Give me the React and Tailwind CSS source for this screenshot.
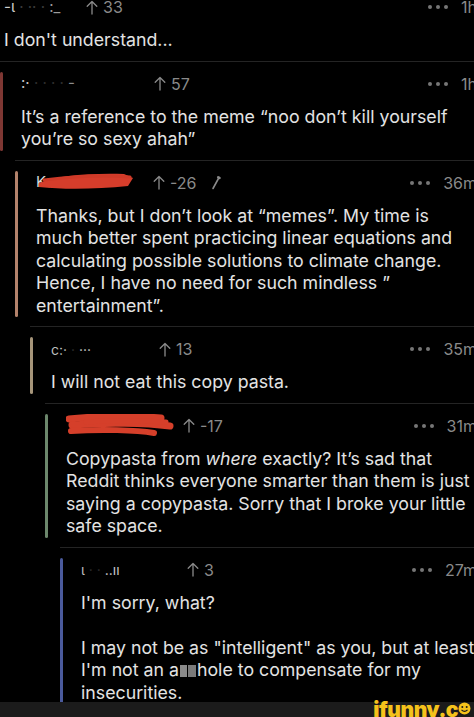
import React from 'react';

const FONT = { fontFamily: 'Inter, "Noto Sans", sans-serif' };

function UpArrow() {
  return (
    <svg width="12" height="15" viewBox="0 0 12 15" fill="none" stroke="#8a8a8a" strokeWidth="1.3" strokeLinecap="round" strokeLinejoin="round">
      <path d="M6 14V1.5M1.2 6.3L6 1.5l4.8 4.8" />
    </svg>
  );
}

function Dots() {
  return (
    <div className="flex items-center gap-[4px]">
      <span className="w-[4px] h-[4px] rounded-full bg-[#767676]" />
      <span className="w-[4px] h-[4px] rounded-full bg-[#767676]" />
      <span className="w-[4px] h-[4px] rounded-full bg-[#767676]" />
    </div>
  );
}

function Comment({ indent, bar, user, score, edited, time, children, first }) {
  return (
    <div className={`${indent} ${first ? '-mt-[15px]' : 'border-t border-[#242424]'}`}>
      <div className="flex pt-[10px] pb-[9px]">
        {bar && <div className={`w-[3px] shrink-0 rounded-full mr-[18px] ${bar}`} />}
        <div className="flex-1 min-w-0">
          <div className="flex items-center h-[24px] text-[16px] text-[#8a8a8a]">
            {user}
            <UpArrow />
            <span className="ml-[5px]">{score}</span>
            {edited && (
              <svg className="ml-[14px]" width="10" height="15" viewBox="0 0 10 15" fill="none" stroke="#8a8a8a" strokeLinecap="round">
                <path d="M2 13.5L8 2.5" strokeWidth="1.6" />
                <path d="M7.2 2.2l1.4 0.8" strokeWidth="2.4" />
              </svg>
            )}
            <div className="ml-auto flex items-center gap-[13px]">
              <Dots />
              <span>{time}</span>
            </div>
          </div>
          <div className="mt-[10px] text-[17.75px] leading-[22.5px] text-[#e3e3e3] whitespace-nowrap">
            {children}
          </div>
        </div>
      </div>
    </div>
  );
}

export default function App() {
  return (
    <div className="relative w-[474px] h-[717px] overflow-hidden bg-black" style={FONT}>
      <div className="w-[477px]">
        <Comment
          first
          indent="pl-[4px]"
          time="1h"
          score="33"
          user={
            <span className="w-[82px] shrink-0 text-[15px]">
              <span className="text-[#d0d0d0]">-ι</span>
              <span className="text-[#3c3c3c]"> · ·· ·  </span>
              <span className="text-[#9c9c9c]">:_</span>
            </span>
          }
        >
          I don't understand...
        </Comment>

        <Comment
          indent="ml-0"
          bar="bg-[#7e3733]"
          time="1h"
          score="57"
          user={
            <span className="w-[133px] shrink-0 text-[15px]">
              <span className="text-[#c8c8c8]">:·</span>
              <span className="text-[#2e2e2e]">    ·  ·   ·    ·   </span>
              <span className="text-[#8c8c8c]">-</span>
            </span>
          }
        >
          It’s a reference to the meme “noo don’t kill yourself
          <br />
          you’re so sexy ahah”
        </Comment>

        <Comment
          indent="ml-[15px]"
          bar="bg-[#b3826b]"
          time="36m"
          score="-26"
          edited
          user={
            <span className="relative w-[117px] shrink-0 text-[15px] text-[#d8d8d8]">
              Ka
              <svg className="absolute left-0 top-0" width="100" height="22" viewBox="0 0 100 22">
                <path d="M3 12C20 5 50 2 88 3L97 7L92 15C62 18 30 19 3 16Z" fill="#d63d2b" />
                <path d="M8 9C40 5 70 4 94 6" stroke="#cf3a28" strokeWidth="3" strokeLinecap="round" fill="none" />
              </svg>
            </span>
          }
        >
          Thanks, but I don’t look at “memes”. My time is
          <br />
          much better spent practicing linear equations and
          <br />
          calculating possible solutions to climate change.
          <br />
          Hence, I have no need for such mindless ”
          <br />
          entertainment”.
        </Comment>

        <Comment
          indent="ml-[30px]"
          bar="bg-[#a6957a]"
          time="35m"
          score="13"
          user={
            <span className="w-[108px] shrink-0 text-[14px]">
              <span className="text-[#bdbdbd]">c:·</span>
              <span className="text-[#2f2f2f]">        ·        </span>
              <span className="text-[#c8c8c8]">···</span>
            </span>
          }
        >
          I will not eat this copy pasta.
        </Comment>

        <Comment
          indent="ml-[45px]"
          bar="bg-[#6c876c]"
          time="31m"
          score="-17"
          user={
            <span className="relative w-[117px] h-[24px] shrink-0">
              <svg className="absolute left-0 top-0" width="110" height="24" viewBox="0 0 110 24" fill="none" stroke="#d53f2a" strokeLinecap="round">
                <path d="M3 5C30 2 70 2 95 4" strokeWidth="7" />
                <path d="M6 11C40 8 80 9 104 12" strokeWidth="7" />
                <path d="M5 17C35 15 70 16 88 19" strokeWidth="6" />
                <path d="M20 8C50 6 80 7 100 8" strokeWidth="5" />
              </svg>
            </span>
          }
        >
          Copypasta from <i>where</i> exactly? It’s sad that
          <br />
          Reddit thinks everyone smarter than them is just
          <br />
          saying a copypasta. Sorry that I broke your little
          <br />
          safe space.
        </Comment>

        <Comment
          indent="ml-[60px]"
          bar="bg-[#4a5a9c]"
          time="27m"
          score="3"
          user={
            <span className="w-[106px] shrink-0 text-[14px]">
              <span className="text-[#bdbdbd]">ι</span>
              <span className="text-[#2f2f2f]">      ·   ·      </span>
              <span className="text-[#c8c8c8]">..ıı</span>
            </span>
          }
        >
          I'm sorry, what?
          <br />
          <br />
          I may not be as "intelligent" as you, but at least
          <br />
          I'm not an a
          <span className="inline-flex align-[-1px] h-[12px] w-[16px] gap-[1px] mx-[1px]">
            <span className="flex-1 bg-[#8a8a8a]" />
            <span className="flex-1 bg-[#7a7a7a]" />
          </span>
          hole to compensate for my
          <br />
          insecurities.
        </Comment>
      </div>

      <div className="absolute left-0 bottom-0 w-full h-[15px] bg-[#1b1b1b]">
        <div className="absolute right-[3px] top-[-3px] flex items-start text-[#f5c21b] font-black text-[21px] leading-[21px] tracking-[-0.5px]">
          <span>ifunny.c</span>
          <svg className="mt-[3px]" width="13" height="13" viewBox="0 0 13 13">
            <circle cx="6.5" cy="6.5" r="6" fill="#f5c21b" />
            <circle cx="4.3" cy="5" r="1" fill="#1b1b1b" />
            <circle cx="8.7" cy="5" r="1" fill="#1b1b1b" />
            <path d="M3.5 7.8Q6.5 10.8 9.5 7.8" stroke="#1b1b1b" strokeWidth="1.2" fill="none" />
          </svg>
        </div>
      </div>
    </div>
  );
}
